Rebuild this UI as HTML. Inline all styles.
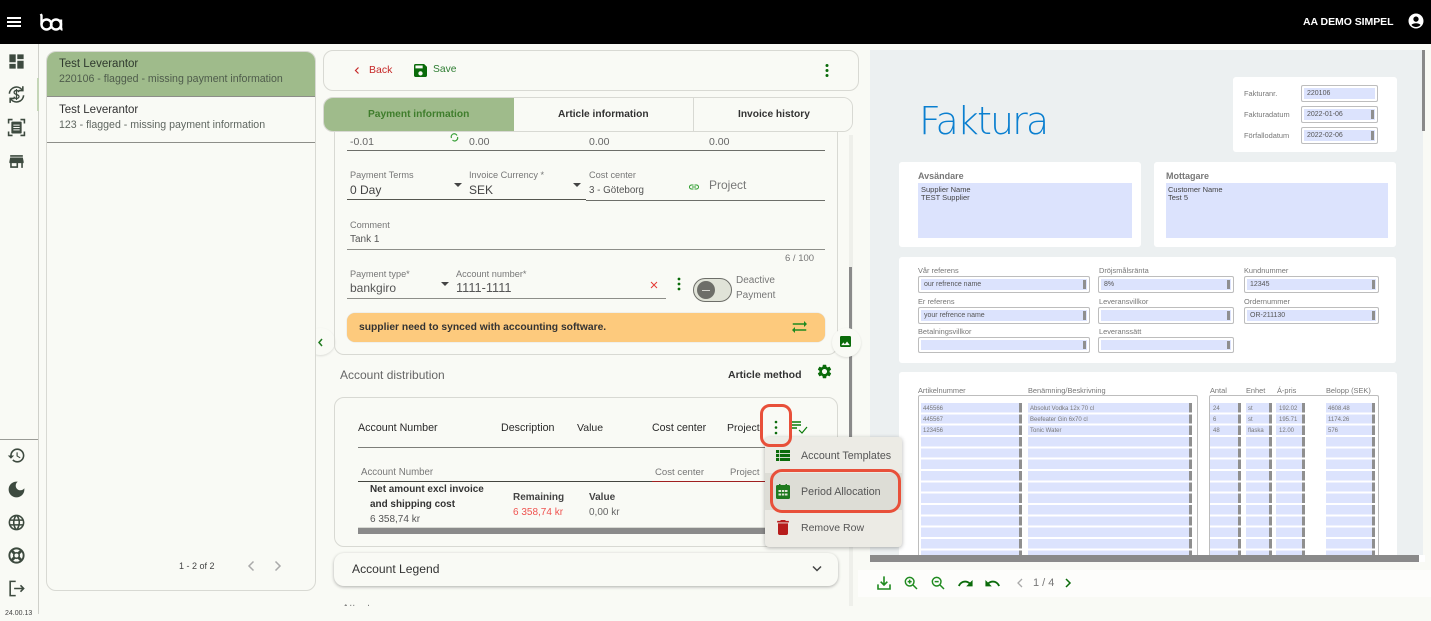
<!DOCTYPE html>
<html><head><meta charset="utf-8">
<style>
html,body{margin:0;padding:0;width:1431px;height:614px;overflow:hidden;background:#f9faf5;font-family:"Liberation Sans",sans-serif;color:#333}
.a,.t,svg.i{position:absolute}
.t{white-space:nowrap;line-height:14px;font-size:10.5px}
.b{font-weight:bold}
.g{background:#ecf0f1}
.w{position:absolute;background:#fff;border-radius:3px}
.f{position:absolute;box-sizing:border-box;border:1px solid #bdbdbd;border-radius:2px;background:#dce3fd;box-shadow:inset 0 0 0 2px #fff;font-size:7px;color:#555;line-height:15px;padding-left:5px;overflow:hidden;white-space:nowrap}
.f:after{content:"";position:absolute;right:3px;top:3px;bottom:3px;width:3px;background:#8f8f8f}
.f.n:after{display:none}
.il{position:absolute;font-size:7.4px;color:#777;line-height:10px;white-space:nowrap}
.c{position:absolute;top:403px;height:152px;background:repeating-linear-gradient(#dce3fd 0,#dce3fd 9.3px,#fff 9.3px,#fff 11.33px)}
.c:after{content:"";position:absolute;right:0;top:0;bottom:0;width:3px;background:repeating-linear-gradient(#8f8f8f 0,#8f8f8f 9.3px,#fff 9.3px,#fff 11.33px)}
.r{position:absolute;font-size:6px;color:#777;line-height:10px;white-space:nowrap}
</style></head><body>

<!-- top bar -->
<div class="a" style="left:0;top:0;width:1431px;height:44px;background:#000"></div>
<div class="a" style="left:7px;top:17px;width:14px;height:2px;background:#fff"></div>
<div class="a" style="left:7px;top:21px;width:14px;height:2px;background:#fff"></div>
<div class="a" style="left:7px;top:25px;width:14px;height:2px;background:#fff"></div>
<svg class="i" style="left:39px;top:13px" width="25" height="18" viewBox="0 0 25 18" fill="none" stroke="#fff" stroke-width="2.4"><path d="M1.800 1L2.500 2.500V11.500"/><circle cx="7.500" cy="11.500" r="5"/><circle cx="17" cy="11.500" r="5"/><path d="M22 6.500V14.500Q22 16.500 23.500 16.500"/></svg>
<div class="t b" style="left:1303px;top:15px;color:#fff;font-size:10.5px;letter-spacing:-.05px">AA DEMO SIMPEL</div>
<svg class="i" style="left:1407px;top:12px" width="18" height="18" viewBox="0 0 24 24" fill="#fff"><path d="M12 2C6.48 2 2 6.48 2 12s4.48 10 10 10 10-4.48 10-10S17.52 2 12 2zm0 4c1.93 0 3.5 1.57 3.5 3.5S13.93 13 12 13s-3.500-1.57-3.500-3.500S10.07 6 12 6zm0 14c-2.030 0-4.430-.82-6.140-2.880C7.550 15.800 9.680 15 12 15s4.450.8 6.140 2.120C16.430 19.180 14.030 20 12 20z"/></svg>

<!-- sidebar -->
<div class="a" style="left:38px;top:44px;width:1px;height:570px;background:#cfd0ca"></div>
<div class="a" style="left:37px;top:78px;width:2px;height:33px;background:#c5d6b8"></div>
<div class="a" style="left:0;top:439px;width:38px;height:1px;background:#9a9b96"></div>
<svg class="i" style="left:7px;top:52px" width="19" height="19" viewBox="0 0 24 24" fill="#3d4a3f"><path d="M3 13h8V3H3v10zm0 8h8v-6H3v6zm10 0h8V11h-8v10zm0-18v6h8V3h-8z"/></svg>
<svg class="i" style="left:7px;top:85px" width="19" height="19" viewBox="0 0 24 24" fill="none" stroke="#3d4a3f" stroke-width="2"><path d="M3 11a9 9 0 0 1 16-5"/><path d="M21 13a9 9 0 0 1-16 5"/><path d="M20 1.500V7h-5.500M4 22.500V17h5.500"/><path d="M15 9c-.5-1.300-1.500-2-3-2-1.800 0-3 1-3 2.400 0 3.200 6.200 2 6.200 5.200 0 1.400-1.300 2.400-3.200 2.400-1.600 0-2.800-.8-3.200-2.200M12 5v14" stroke-width="1.600"/></svg>
<svg class="i" style="left:7px;top:118px" width="19" height="19" viewBox="0 0 24 24" fill="none" stroke="#3d4a3f" stroke-width="2"><path d="M2 7V2h5M17 2h5v5M22 17v5h-5M7 22H2v-5"/><rect x="5.500" y="4.500" width="13" height="15" rx="1" fill="#3d4a3f" stroke="none"/><path d="M8 9h8M8 12h8M8 15h8" stroke="#f9faf5" stroke-width="1.300"/></svg>
<svg class="i" style="left:7px;top:152px" width="19" height="19" viewBox="0 0 24 24" fill="#3d4a3f"><path d="M20 4H4v2h16V4zm1 10v-2l-1-5H4l-1 5v2h1v6h10v-6h4v6h2v-6h1zm-9 4H6v-4h6v4z"/></svg>
<svg class="i" style="left:7px;top:446px" width="19" height="19" viewBox="0 0 24 24" fill="#3d4a3f"><path d="M13 3c-4.970 0-9 4.030-9 9H1l3.890 3.890.07.14L9 12H6c0-3.870 3.130-7 7-7s7 3.130 7 7-3.130 7-7 7c-1.930 0-3.680-.79-4.940-2.060l-1.420 1.420C8.270 19.990 10.510 21 13 21c4.970 0 9-4.030 9-9s-4.030-9-9-9zm-1 5v5l4.280 2.540.72-1.210-3.500-2.080V8H12z"/></svg>
<svg class="i" style="left:6px;top:479px" width="21" height="21" viewBox="0 0 24 24" fill="#3d4a3f"><path d="M12 3c-4.970 0-9 4.030-9 9s4.030 9 9 9 9-4.030 9-9c0-.46-.04-.92-.1-1.360-.98 1.370-2.580 2.260-4.400 2.260-2.980 0-5.400-2.420-5.400-5.400 0-1.810.89-3.420 2.260-4.400-.44-.06-.9-.1-1.360-.1z"/></svg>
<svg class="i" style="left:7px;top:513px" width="19" height="19" viewBox="0 0 24 24" fill="#3d4a3f"><path d="M11.990 2C6.470 2 2 6.480 2 12s4.470 10 9.990 10C17.520 22 22 17.520 22 12S17.520 2 11.990 2zm6.930 6h-2.950c-.32-1.250-.78-2.450-1.380-3.560 1.840.63 3.370 1.910 4.330 3.560zM12 4.040c.83 1.200 1.480 2.530 1.910 3.960h-3.820c.43-1.430 1.080-2.760 1.910-3.960zM4.260 14C4.100 13.360 4 12.690 4 12s.1-1.360.26-2h3.380c-.08.66-.14 1.320-.14 2 0 .68.06 1.340.14 2H4.260zm.82 2h2.950c.32 1.250.78 2.450 1.380 3.560-1.840-.63-3.370-1.900-4.330-3.560zm2.950-8H5.080c.96-1.660 2.490-2.930 4.330-3.560C8.810 5.550 8.350 6.750 8.030 8zM12 19.960c-.83-1.200-1.480-2.530-1.910-3.960h3.820c-.43 1.430-1.080 2.760-1.910 3.960zM14.340 14H9.660c-.09-.66-.16-1.320-.16-2 0-.68.07-1.350.16-2h4.680c.09.65.16 1.320.16 2 0 .68-.07 1.340-.16 2zm.25 5.560c.6-1.110 1.060-2.310 1.380-3.560h2.950c-.96 1.650-2.490 2.930-4.330 3.560zM16.360 14c.08-.66.14-1.320.14-2 0-.68-.06-1.340-.14-2h3.380c.16.64.26 1.310.26 2s-.1 1.360-.26 2h-3.380z"/></svg>
<svg class="i" style="left:7px;top:546px" width="19" height="19" viewBox="0 0 24 24" fill="none" stroke="#3d4a3f"><circle cx="12" cy="12" r="9" stroke-width="2.400"/><circle cx="12" cy="12" r="3.500" stroke-width="2"/><path d="M5.500 5.500l4 4M18.500 5.500l-4 4M5.500 18.500l4-4M18.500 18.500l-4-4" stroke-width="3.600"/></svg>
<svg class="i" style="left:7px;top:579px" width="19" height="19" viewBox="0 0 24 24" fill="none" stroke="#3d4a3f" stroke-width="2"><path d="M11 3H4v18h7M9 12h12M17 8l4 4-4 4"/></svg>
<div class="t" style="left:5px;top:607px;font-size:7px;color:#444;line-height:14px">24.00.13</div>

<!-- left collapse button (clipped by list column) -->
<div class="a" style="left:316px;top:320px;width:30px;height:45px;overflow:hidden"><div class="a" style="left:-10px;top:8px;width:29px;height:27px;border-radius:50%;background:#f9faf5;box-shadow:0 1px 2px rgba(0,0,0,.12)"></div></div>
<svg class="i" style="left:317px;top:338px" width="7" height="9" viewBox="0 0 7 9" fill="none" stroke="#1f7a1f" stroke-width="1.500"><path d="M5 1L2 4.500 5 8"/></svg>

<!-- list panel -->
<div class="a" style="left:46px;top:51px;width:270px;height:540px;box-sizing:border-box;border:1px solid #d8d9d3;border-radius:10px;overflow:hidden">
  <div class="a" style="left:0;top:0;width:268px;height:44px;background:#9fbb8b"></div>
  <div class="a" style="left:0;top:44px;width:268px;height:1px;background:#8d8e89"></div>
  <div class="a" style="left:0;top:90px;width:268px;height:1px;background:#8d8e89"></div>
</div>
<div class="t" style="left:59px;top:57px;font-size:11.500px;color:#2f3a2e">Test Leverantor</div>
<div class="t" style="left:59px;top:72px;font-size:10.600px;color:#4f5c4c">220106 - flagged - missing payment information</div>
<div class="t" style="left:59px;top:103px;font-size:11.500px;color:#333">Test Leverantor</div>
<div class="t" style="left:59px;top:118px;font-size:10.600px;color:#5f6660">123 - flagged - missing payment information</div>
<div class="t" style="left:179px;top:559px;font-size:9px;color:#444">1 - 2 of 2</div>
<svg class="i" style="left:245px;top:559px" width="12" height="14" viewBox="0 0 12 14" fill="none" stroke="#aaa" stroke-width="1.500"><path d="M8.500 2.500L4 7l4.500 4.500"/></svg>
<svg class="i" style="left:272px;top:559px" width="12" height="14" viewBox="0 0 12 14" fill="none" stroke="#aaa" stroke-width="1.500"><path d="M3.500 2.500L8 7l-4.500 4.500"/></svg>

<!-- action card -->
<div class="a" style="left:323px;top:50px;width:536px;height:41px;box-sizing:border-box;border:1px solid #d8d9d3;border-radius:10px"></div>
<svg class="i" style="left:353px;top:66px" width="8" height="9" viewBox="0 0 8 9" fill="none" stroke="#c62828" stroke-width="1.200"><path d="M5.500 1.500L2.500 4.500l3 3"/></svg>
<div class="t" style="left:369px;top:63px;color:#c62828;font-size:10.500px">Back</div>
<svg class="i" style="left:414px;top:64px" width="13" height="13" viewBox="3 3 18 18" fill="#0a6b0a"><path d="M17 3H5c-1.110 0-2 .9-2 2v14c0 1.100.89 2 2 2h14c1.100 0 2-.9 2-2V7l-4-4zm-5 16c-1.660 0-3-1.340-3-3s1.340-3 3-3 3 1.340 3 3-1.340 3-3 3zm3-10H5V5h10v4z"/></svg>
<div class="t" style="left:433px;top:63px;color:#2e7d32;font-size:10.300px">Save</div>
<svg class="i" style="left:825px;top:63px" width="4" height="15" viewBox="0 0 4 15" fill="#0a6b0a"><circle cx="2" cy="2.500" r="1.500"/><circle cx="2" cy="7.500" r="1.500"/><circle cx="2" cy="12.500" r="1.500"/></svg>

<!-- middle scrollbar -->
<div class="a" style="left:849px;top:135px;width:4px;height:471px;background:#eeefea"></div>
<div class="a" style="left:849px;top:267px;width:3px;height:172px;background:#8a8a8a"></div>

<!-- form card -->
<div class="a" style="left:334px;top:120px;width:504px;height:235px;box-sizing:border-box;border:1px solid #d8d9d3;border-top:0;border-radius:0 0 10px 10px"></div>

<!-- tabs -->
<div class="a" style="left:323px;top:97px;width:530px;height:35px;box-sizing:border-box;border:1px solid #d8d9d3;border-radius:10px;overflow:hidden"><div class="a" style="left:0;top:0;width:190px;height:33px;background:#9fbb8b"></div><div class="a" style="left:190px;top:0;right:0;height:33px;background:#f9faf5"></div><div class="a" style="left:369px;top:0;width:1px;height:33px;background:#d8d9d3"></div></div>
<div class="t b" style="left:368px;top:108px;color:#3f7d2c;font-size:10.200px">Payment information</div>
<div class="t b" style="left:558px;top:108px;color:#333;font-size:10.200px">Article information</div>
<div class="t b" style="left:738px;top:108px;color:#333;font-size:10.200px">Invoice history</div>

<div class="t" style="left:350px;top:135px;color:#666;font-size:10.500px">-0.01</div>
<svg class="i" style="left:450px;top:133px" width="9" height="9" viewBox="0 0 9 9" fill="none" stroke="#3aa03a" stroke-width="1.200"><path d="M1.500 5A3 3 0 0 1 7 2.500M7.500 4A3 3 0 0 1 2.500 7"/></svg>
<div class="t" style="left:469px;top:135px;color:#666;font-size:10.500px">0.00</div>
<div class="t" style="left:589px;top:135px;color:#666;font-size:10.500px">0.00</div>
<div class="t" style="left:709px;top:135px;color:#666;font-size:10.500px">0.00</div>
<div class="a" style="left:347px;top:150px;width:478px;height:1px;background:#6d6e69"></div>

<div class="t" style="left:350px;top:168px;color:#777;font-size:9.200px">Payment Terms</div>
<div class="t" style="left:350px;top:183px;color:#444;font-size:12px">0 Day</div>
<div class="a" style="left:454px;top:183px;border:4px solid transparent;border-top:4px solid #444;border-bottom:0"></div>
<div class="t" style="left:469px;top:168px;color:#777;font-size:9.200px">Invoice Currency *</div>
<div class="t" style="left:469px;top:183px;color:#444;font-size:12px">SEK</div>
<div class="a" style="left:573px;top:183px;border:4px solid transparent;border-top:4px solid #444;border-bottom:0"></div>
<div class="a" style="left:347px;top:199px;width:239px;height:1px;background:#55564f"></div>
<div class="t" style="left:589px;top:168px;color:#777;font-size:9.200px">Cost center</div>
<div class="t" style="left:589px;top:184px;color:#555;font-size:9.800px">3 - Göteborg</div>
<svg class="i" style="left:689px;top:182px" width="10" height="10" viewBox="2 2 20 20" fill="#2e9e2e"><path d="M3.900 12c0-1.710 1.390-3.100 3.100-3.100h4V7H7c-2.760 0-5 2.240-5 5s2.240 5 5 5h4v-1.900H7c-1.710 0-3.100-1.390-3.100-3.100zM8 13h8v-2H8v2zm9-6h-4v1.900h4c1.710 0 3.100 1.390 3.100 3.100s-1.390 3.100-3.100 3.100h-4V17h4c2.760 0 5-2.240 5-5s-2.240-5-5-5z"/></svg>
<div class="t" style="left:709px;top:178px;color:#777;font-size:12px">Project</div>
<div class="a" style="left:586px;top:200px;width:239px;height:1px;background:#6d6e69"></div>

<div class="t" style="left:350px;top:218px;color:#777;font-size:9.200px">Comment</div>
<div class="t" style="left:350px;top:233px;color:#555;font-size:10px">Tank 1</div>
<div class="a" style="left:347px;top:249px;width:478px;height:1px;background:#8d8e89"></div>
<div class="t" style="left:785px;top:252px;color:#777;font-size:9.500px">6 / 100</div>

<div class="t" style="left:350px;top:267px;color:#777;font-size:9.200px">Payment type*</div>
<div class="t" style="left:350px;top:281px;color:#555;font-size:12px">bankgiro</div>
<div class="a" style="left:441px;top:282px;border:4px solid transparent;border-top:4px solid #444;border-bottom:0"></div>
<div class="t" style="left:456px;top:267px;color:#777;font-size:9.200px">Account number*</div>
<div class="t" style="left:456px;top:281px;color:#555;font-size:12.800px">1111-1111</div>
<svg class="i" style="left:650px;top:281px" width="8" height="8" viewBox="0 0 8 8" stroke="#e53935" stroke-width="1"><path d="M1 1l6 6M7 1L1 7"/></svg>
<div class="a" style="left:347px;top:298px;width:319px;height:1px;background:#8d8e89"></div>
<svg class="i" style="left:677px;top:277px" width="4" height="14" viewBox="0 0 4 14" fill="#0a6b0a"><circle cx="2" cy="2" r="1.400"/><circle cx="2" cy="7" r="1.400"/><circle cx="2" cy="12" r="1.400"/></svg>
<div class="a" style="left:693px;top:278px;width:39px;height:24px;box-sizing:border-box;border:1px solid #6d6e69;border-radius:12px;background:#e0e3d8"></div>
<div class="a" style="left:697px;top:281px;width:18px;height:18px;border-radius:50%;background:#6d6e69"></div>
<div class="a" style="left:702px;top:289.500px;width:8px;height:1.500px;background:#d5d6d0"></div>
<div class="t" style="left:736px;top:274px;color:#777;font-size:10px">Deactive</div>
<div class="t" style="left:736px;top:289px;color:#777;font-size:10px">Payment</div>

<div class="a" style="left:347px;top:313px;width:478px;height:29px;border-radius:8px;background:#fdca7d;box-shadow:0 0 1px #bbb"></div>
<div class="t b" style="left:359px;top:321px;color:#333;font-size:10.300px">supplier need to synced with accounting software.</div>
<svg class="i" style="left:792px;top:320px" width="15" height="14" viewBox="2 4 20 16" fill="#1f8a1f"><path d="M18 12l4-4-4-4v3H3v2h15zM6 12l-4 4 4 4v-3h15v-2H6z"/></svg>

<!-- right image button -->
<div class="a" style="left:832px;top:328px;width:29px;height:29px;border-radius:50%;background:#f9faf5;box-shadow:0 1px 2px rgba(0,0,0,.12)"></div>
<svg class="i" style="left:840px;top:336px" width="11" height="11" viewBox="3 3 18 18" fill="#0a6b0a"><path d="M21 19V5c0-1.100-.9-2-2-2H5c-1.100 0-2 .9-2 2v14c0 1.100.9 2 2 2h14c1.100 0 2-.9 2-2zM8.500 13.500l2.500 3.010L14.500 12l4.500 6H5l3.500-4.500z"/></svg>

<div class="t" style="left:340px;top:368px;color:#666;font-size:12px">Account distribution</div>
<div class="t b" style="left:728px;top:368px;color:#333;font-size:10.500px">Article method</div>
<svg class="i" style="left:816px;top:363px" width="17" height="17" viewBox="0 0 24 24" fill="#0a6b0a"><path d="M19.140 12.940c.04-.3.06-.61.06-.94 0-.32-.02-.64-.07-.94l2.030-1.580c.18-.14.23-.41.12-.61l-1.920-3.320c-.12-.22-.37-.29-.59-.22l-2.390.96c-.5-.38-1.030-.7-1.620-.94l-.36-2.540c-.04-.24-.24-.41-.48-.41h-3.840c-.24 0-.43.17-.47.41l-.36 2.540c-.59.24-1.130.57-1.620.94l-2.390-.96c-.22-.08-.47 0-.59.22L2.740 8.870c-.12.21-.08.47.12.61l2.030 1.580c-.05.3-.09.63-.09.94s.02.64.07.94l-2.030 1.580c-.18.14-.23.41-.12.61l1.920 3.320c.12.22.37.29.59.22l2.390-.96c.5.38 1.030.7 1.620.94l.36 2.540c.05.24.24.41.48.41h3.840c.24 0 .44-.17.47-.41l.36-2.540c.59-.24 1.130-.56 1.620-.94l2.390.96c.22.08.47 0 .59-.22l1.920-3.320c.12-.22.07-.47-.12-.61l-2.010-1.580zM12 15.600c-1.980 0-3.600-1.620-3.600-3.600s1.620-3.600 3.600-3.600 3.600 1.620 3.600 3.600-1.620 3.600-3.600 3.600z"/></svg>

<!-- distribution card -->
<div class="a" style="left:334px;top:397px;width:504px;height:150px;box-sizing:border-box;border:1px solid #d8d9d3;border-radius:10px"></div>
<div class="t" style="left:358px;top:421px;color:#2a2a2a;font-size:10.700px">Account Number</div>
<div class="t" style="left:501px;top:421px;color:#2a2a2a;font-size:10.700px">Description</div>
<div class="t" style="left:577px;top:421px;color:#2a2a2a;font-size:10.500px">Value</div>
<div class="t" style="left:652px;top:421px;color:#2a2a2a;font-size:10.600px">Cost center</div>
<div class="t" style="left:727px;top:421px;color:#2a2a2a;font-size:10.500px">Project</div>
<div class="a" style="left:358px;top:447px;width:465px;height:1px;background:#7d7e79"></div>
<div class="t" style="left:361px;top:466px;color:#777;font-size:9.700px">Account Number</div>
<div class="t" style="left:655px;top:466px;color:#777;font-size:9.600px">Cost center</div>
<div class="t" style="left:730px;top:466px;color:#777;font-size:9.500px">Project</div>
<div class="a" style="left:358px;top:481px;width:294px;height:1px;background:#44453f"></div>
<div class="a" style="left:652px;top:481px;width:115px;height:1px;background:#a02020"></div>
<div class="t b" style="left:370px;top:483px;color:#333;font-size:9.950px">Net amount excl invoice</div>
<div class="t b" style="left:370px;top:498px;color:#333;font-size:9.950px">and shipping cost</div>
<div class="t" style="left:370px;top:513px;color:#555;font-size:10px">6 358,74 kr</div>
<div class="t b" style="left:513px;top:491px;color:#444;font-size:10px">Remaining</div>
<div class="t" style="left:513px;top:506px;color:#ef5350;font-size:10px">6 358,74 kr</div>
<div class="t b" style="left:589px;top:491px;color:#444;font-size:10px">Value</div>
<div class="t" style="left:589px;top:506px;color:#666;font-size:10px">0,00 kr</div>
<div class="a" style="left:358px;top:527px;width:465px;height:7px;background:#8a8a8a;border-top:1px solid #d8d9d3;box-sizing:border-box"></div>

<!-- legend -->
<div class="a" style="left:334px;top:553px;width:504px;height:33px;box-sizing:border-box;border-radius:10px;background:#f9faf5;box-shadow:0 1px 3px rgba(0,0,0,.3)"></div>
<div class="t" style="left:352px;top:562px;color:#333;font-size:12.100px">Account Legend</div>
<svg class="i" style="left:811px;top:565px" width="12" height="8" viewBox="0 0 12 8" fill="none" stroke="#444" stroke-width="1.500"><path d="M2 1.500l4 4 4-4"/></svg>
<div class="a" style="left:342px;top:598px;width:60px;height:8px;overflow:hidden"><div class="t" style="left:0;top:4px;color:#666;font-size:11px">Attest</div></div>

<!-- invoice viewer -->
<div class="a g" style="left:870px;top:50px;width:553px;height:505px"></div>
<div class="a" style="left:1422px;top:50px;width:3px;height:81px;background:#8a8a8a"></div>
<div class="t" style="left:919px;top:99px;color:#0a7fd0;font-size:38px;line-height:44px;font-family:'DejaVu Sans',sans-serif;font-weight:200;letter-spacing:-1.900px">Faktura</div>

<div class="w" style="left:1233px;top:77px;width:164px;height:75px"></div>
<div class="il" style="left:1244px;top:89px">Fakturanr.</div>
<div class="il" style="left:1244px;top:110px">Fakturadatum</div>
<div class="il" style="left:1244px;top:131px">Förfallodatum</div>
<div class="f n" style="left:1301px;top:85px;width:77px;height:17px">220106</div>
<div class="f" style="left:1301px;top:106px;width:77px;height:17px">2022-01-06</div>
<div class="f" style="left:1301px;top:127px;width:77px;height:17px">2022-02-06</div>

<div class="w" style="left:899px;top:162px;width:242px;height:85px"></div>
<div class="t b" style="left:918px;top:169px;font-size:9px;color:#777">Avsändare</div>
<div class="a" style="left:918px;top:183px;width:214px;height:55px;background:#dce3fd"></div>
<div class="r" style="left:921px;top:186px;font-size:7.500px;color:#444;line-height:8.300px">Supplier Name<br>TEST Supplier</div>
<div class="w" style="left:1154px;top:162px;width:242px;height:85px"></div>
<div class="t b" style="left:1166px;top:169px;font-size:9px;color:#777">Mottagare</div>
<div class="a" style="left:1166px;top:183px;width:222px;height:55px;background:#dce3fd"></div>
<div class="r" style="left:1168px;top:186px;font-size:7.500px;color:#444;line-height:8.300px">Customer Name<br>Test 5</div>

<div class="w" style="left:899px;top:257px;width:497px;height:106px"></div>
<div class="il" style="left:918px;top:266px">Vår referens</div>
<div class="il" style="left:1099px;top:266px">Dröjsmålsränta</div>
<div class="il" style="left:1244px;top:266px">Kundnummer</div>
<div class="f" style="left:918px;top:276px;width:172px;height:17px">our refrence name</div>
<div class="f" style="left:1098px;top:276px;width:136px;height:17px">8%</div>
<div class="f" style="left:1244px;top:276px;width:135px;height:17px">12345</div>
<div class="il" style="left:918px;top:297px">Er referens</div>
<div class="il" style="left:1099px;top:297px">Leveransvillkor</div>
<div class="il" style="left:1244px;top:297px">Ordernummer</div>
<div class="f" style="left:918px;top:307px;width:172px;height:17px">your refrence name</div>
<div class="f" style="left:1098px;top:307px;width:136px;height:17px"></div>
<div class="f" style="left:1244px;top:307px;width:135px;height:17px">OR-211130</div>
<div class="il" style="left:918px;top:327px">Betalningsvillkor</div>
<div class="il" style="left:1099px;top:327px">Leveranssätt</div>
<div class="f" style="left:918px;top:337px;width:172px;height:16px"></div>
<div class="f" style="left:1098px;top:337px;width:136px;height:16px"></div>

<div class="w" style="left:899px;top:372px;width:498px;height:183px;border-radius:3px 3px 0 0"></div>
<div class="il" style="left:918px;top:386px">Artikelnummer</div>
<div class="il" style="left:1028px;top:386px">Benämning/Beskrivning</div>
<div class="il" style="left:1210px;top:386px">Antal</div>
<div class="il" style="left:1246px;top:386px">Enhet</div>
<div class="il" style="left:1277px;top:386px">Á-pris</div>
<div class="il" style="left:1326px;top:386px">Belopp (SEK)</div>
<div class="a" style="left:918px;top:395px;width:280px;height:160px;box-sizing:border-box;border:1px solid #bdbdbd;border-bottom:0;border-radius:2px 2px 0 0"></div>
<div class="a" style="left:1209px;top:395px;width:170px;height:160px;box-sizing:border-box;border:1px solid #bdbdbd;border-bottom:0;border-radius:2px 2px 0 0"></div>
<div class="c" style="left:921px;width:101px"></div>
<div class="c" style="left:1028px;width:164px"></div>
<div class="c" style="left:1210px;width:31px"></div>
<div class="c" style="left:1246px;width:26px"></div>
<div class="c" style="left:1276px;width:29px"></div>
<div class="c" style="left:1326px;width:49px"></div>
<div class="r" style="left:923px;top:404px">445566</div><div class="r" style="left:923px;top:415px">445567</div><div class="r" style="left:923px;top:426px">123456</div>
<div class="r" style="left:1030px;top:404px">Absolut Vodka 12x 70 cl</div><div class="r" style="left:1030px;top:415px">Beefeater Gin 6x70 cl</div><div class="r" style="left:1030px;top:426px">Tonic Water</div>
<div class="r" style="left:1213px;top:404px">24</div><div class="r" style="left:1213px;top:415px">6</div><div class="r" style="left:1213px;top:426px">48</div>
<div class="r" style="left:1248px;top:404px">st</div><div class="r" style="left:1248px;top:415px">st</div><div class="r" style="left:1248px;top:426px">flaska</div>
<div class="r" style="left:1279px;top:404px">192.02</div><div class="r" style="left:1279px;top:415px">195.71</div><div class="r" style="left:1279px;top:426px">12.00</div>
<div class="r" style="left:1328px;top:404px">4608.48</div><div class="r" style="left:1328px;top:415px">1174.26</div><div class="r" style="left:1328px;top:426px">576</div>
<div class="a" style="left:870px;top:555px;width:549px;height:7px;background:#8a8a8a"></div>
<div class="a" style="left:1419px;top:555px;width:6px;height:7px;background:#fff"></div>

<!-- viewer toolbar -->
<div class="a" style="left:858px;top:570px;width:573px;height:27px;background:#fdfdfb"></div>
<svg class="i" style="left:876px;top:575px" width="16" height="16" viewBox="0 0 24 24" fill="none" stroke="#1f8a1f" stroke-width="2.400"><path d="M12 2v13M7 10l5 5 5-5"/><path d="M3 14v7h18v-7"/></svg>
<svg class="i" style="left:903px;top:575px" width="16" height="16" viewBox="0 0 24 24" fill="none" stroke="#1f8a1f" stroke-width="2.200"><circle cx="10" cy="10" r="6.500"/><path d="M15 15l6 6M10 7v6M7 10h6"/></svg>
<svg class="i" style="left:930px;top:575px" width="16" height="16" viewBox="0 0 24 24" fill="none" stroke="#1f8a1f" stroke-width="2.200"><circle cx="10" cy="10" r="6.500"/><path d="M15 15l6 6M7 10h6"/></svg>
<svg class="i" style="left:957px;top:575px" width="17" height="17" viewBox="0 0 24 24" fill="#0a6b0a"><path d="M18.400 10.600C16.550 8.990 14.150 8 11.500 8c-4.650 0-8.580 3.030-9.960 7.220L3.900 16c1.050-3.190 4.050-5.500 7.600-5.500 1.950 0 3.730.72 5.120 1.880L13 16h9V7l-3.600 3.600z"/></svg>
<svg class="i" style="left:984px;top:575px" width="17" height="17" viewBox="0 0 24 24" fill="#0a6b0a"><path d="M12.500 8c-2.650 0-5.050.99-6.900 2.600L2 7v9h9l-3.620-3.620c1.390-1.160 3.160-1.880 5.120-1.880 3.540 0 6.550 2.310 7.620 5.500l2.370-.78C21.080 11.030 17.150 8 12.500 8z"/></svg>
<svg class="i" style="left:1015px;top:577px" width="10" height="12" viewBox="0 0 10 12" fill="none" stroke="#aaa" stroke-width="1.300"><path d="M7 2L3 6l4 4"/></svg>
<div class="t" style="left:1033px;top:576px;color:#777;font-size:11px">1 / 4</div>
<svg class="i" style="left:1063px;top:577px" width="10" height="12" viewBox="0 0 10 12" fill="none" stroke="#0a6b0a" stroke-width="1.500"><path d="M3 2l4 4-4 4"/></svg>

<!-- popup menu -->
<div class="a" style="left:765px;top:437px;width:137px;height:110px;background:#ecebe5;border-radius:4px;box-shadow:0 1px 4px rgba(0,0,0,.3)"></div>
<div class="a" style="left:765px;top:473px;width:137px;height:37px;background:#ddddd6"></div>
<svg class="i" style="left:776px;top:449px" width="14" height="13" viewBox="3 5 18 14" fill="#0a6b0a"><path d="M3 14h4v-4H3v4zm0 5h4v-4H3v4zM3 9h4V5H3v4zm5 5h13v-4H8v4zm0 5h13v-4H8v4zM8 5v4h13V5H8z"/></svg>
<div class="t" style="left:801px;top:449px;color:#555;font-size:10.700px">Account Templates</div>
<svg class="i" style="left:776px;top:484px" width="14" height="15" viewBox="0 0 14 15"><rect x="0" y="1" width="14" height="14" rx="1.500" fill="#1f7a1f"/><rect x="3" y="0" width="1.500" height="2" fill="#1f7a1f"/><rect x="9.500" y="0" width="1.500" height="2" fill="#1f7a1f"/><path d="M2.500 6h2.500v2H2.500zM5.800 6h2.500v2H5.800zM9 6h2.500v2H9zM2.500 9.500h2.500v2H2.500zM5.800 9.500h2.500v2H5.800zM9 9.500h2.500v2H9z" fill="#dfe6d5"/></svg>
<div class="t" style="left:801px;top:485px;color:#555;font-size:10.700px">Period Allocation</div>
<svg class="i" style="left:777px;top:520px" width="12" height="15" viewBox="5 3 14 18" fill="#b71c1c"><path d="M6 19c0 1.100.9 2 2 2h8c1.100 0 2-.9 2-2V7H6v12zM19 4h-3.500l-1-1h-5l-1 1H5v2h14V4z"/></svg>
<div class="t" style="left:801px;top:521px;color:#555;font-size:10.500px">Remove Row</div>

<!-- project column dots / list-check -->
<svg class="i" style="left:774px;top:420px" width="4" height="15" viewBox="0 0 4 15" fill="#0a6b0a"><circle cx="2" cy="2" r="1.300"/><circle cx="2" cy="7.500" r="1.300"/><circle cx="2" cy="13" r="1.300"/></svg>
<svg class="i" style="left:790px;top:420px" width="18" height="14" viewBox="0 0 18 14" fill="none" stroke="#0a7a0a" stroke-width="1.400"><path d="M1 2h10M1 5h10M1 8h6"/><path d="M9 10l3 3 5-6" stroke-width="1.200"/></svg>

<!-- red highlights -->
<div class="a" style="left:760px;top:404px;width:32px;height:43px;box-sizing:border-box;border:3px solid #e8503a;border-radius:10px"></div>
<div class="a" style="left:770px;top:469px;width:131px;height:44px;box-sizing:border-box;border:3px solid #e8503a;border-radius:12px"></div>

</body></html>
